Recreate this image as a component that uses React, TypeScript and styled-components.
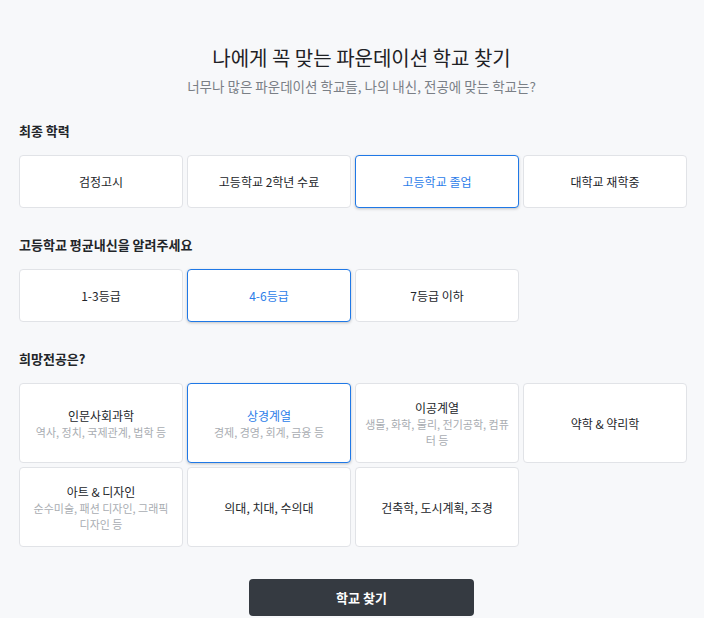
import React, { useState } from 'react';
import styled, { createGlobalStyle } from 'styled-components';

const GlobalStyle = createGlobalStyle`
  html, body {
    margin: 0;
    padding: 0;
    background: #f7f8fa;
  }
  body {
    font-family: "Noto Sans CJK KR", "Noto Sans", sans-serif;
    color: #222529;
  }
  * { box-sizing: border-box; }
`;

const Page = styled.div`
  width: 704px;
  min-height: 618px;
  padding: 44px 0 0 19px;
  display: flex;
  flex-direction: column;
`;

const Header = styled.header`
  display: flex;
  flex-direction: column;
  align-items: center;
  gap: 4px;
  margin-bottom: 25px;
`;

const Title = styled.h1`
  margin: 0;
  font-size: 20px;
  line-height: 28px;
  font-weight: 400;
  color: #1f2226;
`;

const Subtitle = styled.p`
  margin: 0;
  font-size: 13.5px;
  line-height: 20px;
  color: #7a7f86;
`;

const Section = styled.section`
  display: flex;
  flex-direction: column;
  gap: 15px;
  margin-bottom: 27px;
`;

const SectionTitle = styled.h2`
  margin: 0;
  font-size: 13px;
  line-height: 19px;
  font-weight: 700;
  color: #222529;
`;

const Grid = styled.div`
  width: 668px;
  display: grid;
  grid-template-columns: repeat(4, 164px);
  gap: 4px;
`;

const Option = styled.button<{ $selected?: boolean; $tall?: boolean }>`
  height: ${({ $tall }) => ($tall ? '80px' : '53px')};
  padding: 0 9px;
  display: flex;
  flex-direction: column;
  align-items: center;
  justify-content: center;
  background: #ffffff;
  border: 1px solid ${({ $selected }) => ($selected ? '#1f78e6' : '#e1e3e7')};
  border-radius: 4px;
  box-shadow: ${({ $selected }) => ($selected ? '0 1px 3px rgba(0, 0, 0, 0.22)' : 'none')};
  font-family: inherit;
  cursor: pointer;
  text-align: center;
`;

const OptionLabel = styled.span<{ $selected?: boolean }>`
  font-size: 12px;
  line-height: 17px;
  color: ${({ $selected }) => ($selected ? '#2b7de9' : '#222529')};
`;

const OptionDesc = styled.span`
  font-size: 11px;
  line-height: 16px;
  color: #a9adb2;
`;

const Footer = styled.div`
  display: flex;
  justify-content: center;
  margin-top: 5px;
`;

const SearchButton = styled.button`
  width: 225px;
  height: 37px;
  border: none;
  border-radius: 4px;
  background: #353a41;
  color: #ffffff;
  font-family: inherit;
  font-size: 13px;
  font-weight: 700;
  cursor: pointer;
`;

const educations = ['검정고시', '고등학교 2학년 수료', '고등학교 졸업', '대학교 재학중'];
const grades = ['1-3등급', '4-6등급', '7등급 이하'];
const majors: { name: string; desc?: string }[] = [
  { name: '인문사회과학', desc: '역사, 정치, 국제관계, 법학 등' },
  { name: '상경계열', desc: '경제, 경영, 회계, 금융 등' },
  { name: '이공계열', desc: '생물, 화학, 물리, 전기공학, 컴퓨터 등' },
  { name: '약학 & 약리학' },
  { name: '아트 & 디자인', desc: '순수미술, 패션 디자인, 그래픽 디자인 등' },
  { name: '의대, 치대, 수의대' },
  { name: '건축학, 도시계획, 조경' },
];

export default function App() {
  const [education, setEducation] = useState('고등학교 졸업');
  const [grade, setGrade] = useState('4-6등급');
  const [major, setMajor] = useState('상경계열');

  return (
    <>
      <GlobalStyle />
      <Page>
        <Header>
          <Title>나에게 꼭 맞는 파운데이션 학교 찾기</Title>
          <Subtitle>너무나 많은 파운데이션 학교들, 나의 내신, 전공에 맞는 학교는?</Subtitle>
        </Header>

        <Section>
          <SectionTitle>최종 학력</SectionTitle>
          <Grid>
            {educations.map((e) => (
              <Option key={e} $selected={education === e} onClick={() => setEducation(e)}>
                <OptionLabel $selected={education === e}>{e}</OptionLabel>
              </Option>
            ))}
          </Grid>
        </Section>

        <Section>
          <SectionTitle>고등학교 평균내신을 알려주세요</SectionTitle>
          <Grid>
            {grades.map((g) => (
              <Option key={g} $selected={grade === g} onClick={() => setGrade(g)}>
                <OptionLabel $selected={grade === g}>{g}</OptionLabel>
              </Option>
            ))}
          </Grid>
        </Section>

        <Section>
          <SectionTitle>희망전공은?</SectionTitle>
          <Grid>
            {majors.map((m) => (
              <Option key={m.name} $tall $selected={major === m.name} onClick={() => setMajor(m.name)}>
                <OptionLabel $selected={major === m.name}>{m.name}</OptionLabel>
                {m.desc && <OptionDesc>{m.desc}</OptionDesc>}
              </Option>
            ))}
          </Grid>
        </Section>

        <Footer>
          <SearchButton>학교 찾기</SearchButton>
        </Footer>
      </Page>
    </>
  );
}
